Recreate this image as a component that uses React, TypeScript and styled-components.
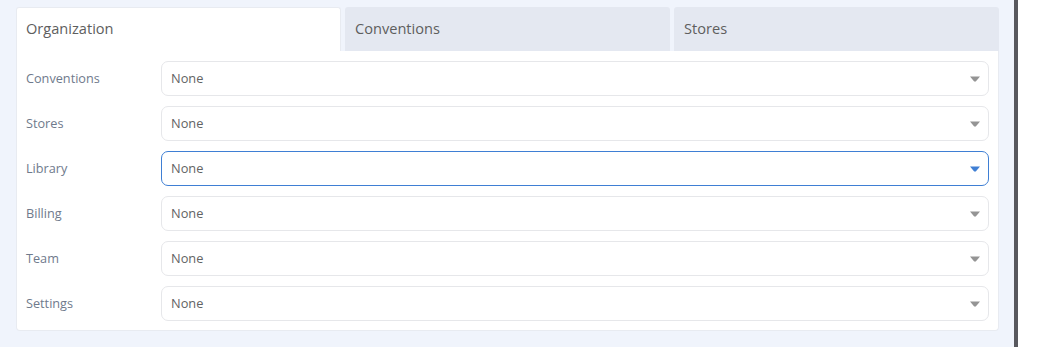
import React from "react";
import styled, { createGlobalStyle } from "styled-components";

const Global = createGlobalStyle`
  html, body { margin: 0; padding: 0; }
  body {
    background: #ffffff;
    font-family: "Open Sans", "Noto Sans", sans-serif;
  }
`;

const Page = styled.div`
  display: flex;
  height: 347px;
  overflow: hidden;
`;

const Main = styled.main`
  width: 1014px;
  box-sizing: border-box;
  padding: 7px 15px 0 16px;
  background: #f0f4fc;
`;

const Divider = styled.div`
  width: 4px;
  background: #58585e;
`;

const Side = styled.div`
  flex: 1;
  background: #ffffff;
`;

const TabBar = styled.div`
  display: grid;
  grid-template-columns: repeat(3, 1fr);
  column-gap: 4px;
`;

const Tab = styled.div<{ $active?: boolean }>`
  height: 44px;
  box-sizing: border-box;
  padding: 0 0 3px 9px;
  display: flex;
  align-items: center;
  font-size: 14.6px;
  color: #5e5e5e;
  background: ${(p) => (p.$active ? "#ffffff" : "#e4e8f1")};
  border-radius: 3px 3px 0 0;
  border: 1px solid ${(p) => (p.$active ? "#e8ebf1" : "transparent")};
  border-bottom: none;
`;

const Body = styled.div`
  background: #ffffff;
  border: 1px solid #e8ebf1;
  border-top: none;
  border-radius: 0 0 4px 4px;
  padding: 10px 9px 9px 9px;
  display: flex;
  flex-direction: column;
  gap: 10px;
`;

const Row = styled.div`
  display: grid;
  grid-template-columns: 135px 1fr;
  align-items: center;
`;

const Label = styled.label`
  font-size: 12.7px;
  color: #6f7a8c;
  padding-bottom: 1px;
`;

const Select = styled.div<{ $focused?: boolean }>`
  height: 35px;
  box-sizing: border-box;
  border: 1px solid ${(p) => (p.$focused ? "#3f7fd4" : "#e6e7ea")};
  border-radius: 7px;
  padding: 0 8px 1px 9px;
  display: flex;
  align-items: center;
  justify-content: space-between;
  font-size: 12.8px;
  color: #636363;
  background: #ffffff;
`;

const Caret = styled.svg<{ $focused?: boolean }>`
  width: 10px;
  height: 6px;
  margin-top: 1px;
  fill: ${(p) => (p.$focused ? "#3f7fd4" : "#949494")};
`;

const fields = ["Conventions", "Stores", "Library", "Billing", "Team", "Settings"];

export default function App() {
  return (
    <>
      <Global />
      <Page>
        <Main>
          <TabBar>
            <Tab $active>Organization</Tab>
            <Tab>Conventions</Tab>
            <Tab>Stores</Tab>
          </TabBar>
          <Body>
            {fields.map((f) => {
              const focused = f === "Library";
              return (
                <Row key={f}>
                  <Label>{f}</Label>
                  <Select $focused={focused}>
                    <span>None</span>
                    <Caret $focused={focused} viewBox="0 0 10 6">
                      <path d="M0 0.5 H10 L5.8 5.5 H4.2 Z" />
                    </Caret>
                  </Select>
                </Row>
              );
            })}
          </Body>
        </Main>
        <Divider />
        <Side />
      </Page>
    </>
  );
}
